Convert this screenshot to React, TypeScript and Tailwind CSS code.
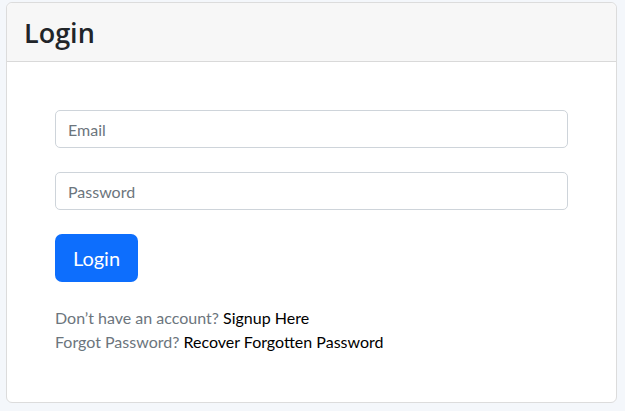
export default function App() {
  return (
    <div className="min-h-screen bg-[#f4f7fb] pt-[2px] pl-[6px] pr-[8px] font-['Lato',sans-serif] text-[#212529]">
      <div className="rounded-[6px] border border-[#dcdcdc] bg-white">
        <div className="flex h-[59px] items-center border-b border-[#d9d9d9] bg-[#f7f7f7] px-[17px] rounded-t-[6px]">
          <h2 className="font-['Open_Sans',sans-serif] text-[27px] font-semibold leading-none">Login</h2>
        </div>
        <div className="px-[48px] pt-[48px] pb-[48px]">
          <form className="flex flex-col">
            <input
              type="email"
              placeholder="Email"
              className="h-[38px] w-full rounded-[5px] border border-[#ced4da] px-[12px] text-[16px] placeholder:text-[#6c757d] outline-none"
            />
            <input
              type="password"
              placeholder="Password"
              className="mt-[24px] h-[38px] w-full rounded-[5px] border border-[#ced4da] px-[12px] text-[16px] placeholder:text-[#6c757d] outline-none"
            />
            <div className="mt-[24px]">
              <button
                type="button"
                className="h-[48px] w-[83px] rounded-[7px] bg-[#0d6efd] text-[20px] text-white"
              >
                Login
              </button>
            </div>
          </form>
          <div className="mt-[24px] text-[16px] leading-[24px] text-[#6c757d]">
            <p>
              Don’t have an account? <a className="text-black">Signup Here</a>
            </p>
            <p>
              Forgot Password? <a className="text-black">Recover Forgotten Password</a>
            </p>
          </div>
        </div>
      </div>
    </div>
  );
}
